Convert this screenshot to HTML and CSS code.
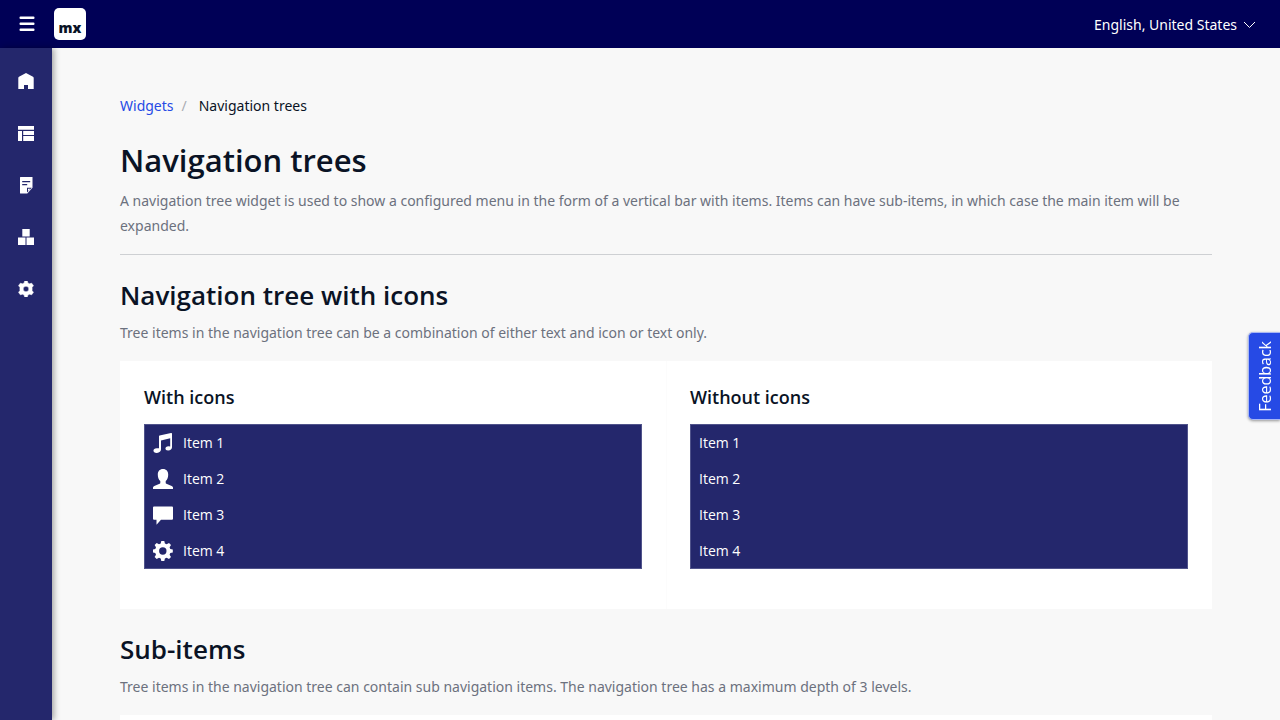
FILE: index.html
```html
<!DOCTYPE html>
<html lang="en">
<head>
<meta charset="utf-8">
<meta name="viewport" content="width=device-width, initial-scale=1">
<title>Navigation trees</title>
<link rel="stylesheet" href="styles.css">
</head>
<body>
<header class="topbar">
  <button class="menu-toggle" type="button" aria-label="Toggle menu">
    <svg width="16" height="16" viewBox="0 0 16 16" fill="currentColor"><rect x="0.5" y="0.5" width="15" height="2.5" rx="1"/><rect x="0.5" y="6.500" width="15" height="2.5" rx="1"/><rect x="0.5" y="12.500" width="15" height="2.5" rx="1"/></svg>
  </button>
  <a class="logo" href="#" aria-label="Home"><span class="logo-text">mx</span></a>
  <button class="language" type="button">English, United States
    <svg width="13" height="8" viewBox="0 0 13 8" fill="none" stroke="currentColor"><path d="M1 1l5.500 5.500L12 1"/></svg>
  </button>
</header>
<div class="layout">
  <nav class="sidebar" aria-label="Main">
    <a class="side-link" href="#" aria-label="Home"><svg width="16" height="16" viewBox="0 0 16 16" fill="currentColor"><path d="M8 0l7 3.700q.7.400.7 1.200V16H10v-4H6v4H.3V4.900Q.3 4.100 1 3.700z"/></svg></a>
    <a class="side-link" href="#" aria-label="Layouts"><svg width="16" height="16" viewBox="0 0 16 16" fill="currentColor"><path d="M0 1h16v3.700H0zM0 6h4v10H0zM5.200 6H16v4H5.200zM5.200 11H16v5H5.200z"/></svg></a>
    <a class="side-link" href="#" aria-label="Pages"><svg width="16" height="17" viewBox="0 0 16 17" fill="currentColor" fill-rule="evenodd"><path d="M2.500 0h12v10.800L9.300 16.500H2.500q-.5 0-.5-.5V.5q0-.5.500-.5zM4.200 4v1.200h8V4zM4.200 7v1.200h5V7zM9 15.500l4.800-4.700H9z"/><path d="M10 11.800h2.500L10 14.300z"/></svg></a>
    <a class="side-link" href="#" aria-label="Widgets"><svg width="16" height="16" viewBox="0 0 16 16" fill="currentColor"><path d="M4.300 0h7.400v7.500H4.300zM0 8.500h7.500V16H0zM8.500 8.500H16V16H8.500z"/></svg></a>
    <a class="side-link" href="#" aria-label="Settings"><svg width="16" height="16" viewBox="0 0 16 16" fill="currentColor" fill-rule="evenodd"><path d="M6.700 0h2.600l.6 2 1.500.8 2.300-.6L15.500 4.700 14.100 6.300v3.400L15.500 11.300l-1.800 2.500-2.300-.6-1.500.8-.6 2H6.700l-.6-2-1.500-.8-2.300.6L.5 11.300l1.400-1.600V6.300L.5 4.700l1.800-2.500 2.300.6L6.100 2zM8 5.200a2.800 2.800 0 1 0 0 5.600 2.800 2.800 0 0 0 0-5.600z" stroke="currentColor" stroke-width=".5" stroke-linejoin="round"/></svg></a>
  </nav>
  <main class="content">
    <nav aria-label="Breadcrumb">
      <ol class="breadcrumb"><li><a href="#">Widgets</a></li><li class="crumb-current" aria-current="page">Navigation trees</li></ol>
    </nav>
    <div class="page-head">
      <h1>Navigation trees</h1>
      <p>A navigation tree widget is used to show a configured menu in the form of a vertical bar with items. Items can have sub-items, in which case the main item will be expanded.</p>
    </div>
    <section class="block">
      <h2>Navigation tree with icons</h2>
      <p>Tree items in the navigation tree can be a combination of either text and icon or text only.</p>
      <div class="card">
        <div class="col">
          <h3>With icons</h3>
          <ul class="tree">
            <li><a href="#"><svg width="20" height="20" viewBox="0 0 20 20" fill="currentColor"><path d="M6 3.300Q6 2.700 6.600 2.500L18 0q1-.1 1 .7v13.600c0 1.800-1.500 3.200-3.900 3.300-3.700 0-3.500-4.200.4-4.300l1.700.2V5.300L8 7.600v8.600c0 2-1.600 3.500-4 3.700-4.700.2-4.700-4.300-.2-4.600L6 15.200z"/></svg>Item 1</a></li>
            <li><a href="#"><svg width="20" height="20" viewBox="0 0 20 20" fill="currentColor"><path d="M10 0c3.400 0 5.200 2.300 5.200 5.700 0 2.900-1 5.100-2.500 6.400v1.600c0 .6.200.9.700 1.100l5.300 2.300q1.300.6 1.300 1.500V20H0v-1.400q0-.9 1.300-1.500l5.300-2.300c.5-.2.700-.5.700-1.100v-1.600C5.800 10.800 4.800 8.600 4.800 5.700 4.800 2.300 6.600 0 10 0z"/></svg>Item 2</a></li>
            <li><a href="#"><svg width="20" height="20" viewBox="0 0 20 20" fill="currentColor"><path d="M1 1.500h18Q20 1.500 20 2.500v11.300q0 1-1 1H8L3.500 19.700v-4.900H1Q0 14.800 0 13.800V2.500q0-1 1-1z"/></svg>Item 3</a></li>
            <li><a href="#"><svg width="20" height="20" viewBox="0 0 20 20" fill="currentColor" fill-rule="evenodd"><path d="M8.300 0h3l.6 2.600 1.700.7L16 2l2 2-1.400 2.300.7 1.700 2.500.6v2.900l-2.500.6-.7 1.700L18 16.100l-2 2-2.400-1.400-1.700.7-.6 2.600h-3l-.6-2.600-1.700-.7-2.300 1.400-2.100-2L3 13.800l-.7-1.700-2.300-.6V8.600L2.300 8 3 6.300 1.600 4l2.100-2L6 3.300l1.700-.7zM9.800 6.300a3.700 3.700 0 1 0 0 7.400 3.700 3.700 0 0 0 0-7.400z"/></svg>Item 4</a></li>
          </ul>
        </div>
        <div class="col">
          <h3>Without icons</h3>
          <ul class="tree">
            <li><a href="#">Item 1</a></li>
            <li><a href="#">Item 2</a></li>
            <li><a href="#">Item 3</a></li>
            <li><a href="#">Item 4</a></li>
          </ul>
        </div>
      </div>
    </section>
    <section class="block">
      <h2>Sub-items</h2>
      <p>Tree items in the navigation tree can contain sub navigation items. The navigation tree has a maximum depth of 3 levels.</p>
      <div class="card"><div class="col"></div></div>
    </section>
  </main>
</div>
<button class="feedback" type="button"><span class="feedback-text">Feedback</span></button>
</body>
</html>
```

FILE: styles.css
```css
* { box-sizing: border-box; }
body {
  margin: 0;
  height: 100vh;
  display: flex;
  flex-direction: column;
  overflow: hidden;
  font: 14px/20px "Noto Sans", "Open Sans", sans-serif;
  color: #0a1325;
  background: #f8f8f8;
}
h1, h2, h3, p, ul, ol { margin: 0; padding: 0; }
h1, h2, h3 { font-family: "Open Sans", sans-serif; font-weight: 600; }
ul, ol { list-style: none; }
a { text-decoration: none; }
button { border: 0; background: none; font: inherit; color: inherit; cursor: pointer; }
svg { display: block; flex: none; }

.topbar {
  flex: none;
  display: flex;
  align-items: center;
  height: 48px;
  padding-right: 24px;
  color: #fff;
  background: #000056;
}
.menu-toggle { display: flex; justify-content: center; width: 54px; padding: 0; }
.logo {
  display: flex;
  align-items: flex-end;
  justify-content: center;
  width: 32px;
  height: 32px;
  border-radius: 5px;
  color: #0a1325;
  background: #fff;
}
.logo-text { font-family: "Open Sans", sans-serif; font-size: 14px; font-weight: 800; line-height: 24px; }
.language {
  display: flex;
  align-items: center;
  gap: 6px;
  margin-left: auto;
  padding: 2px 0 0;
}

.layout { flex: 1; display: flex; min-height: 0; }
.sidebar {
  flex: none;
  width: 52px;
  padding-top: 7px;
  background: #24276c;
  box-shadow: 2px 0 6px rgba(0, 0, 0, .35);
}
.side-link { display: flex; align-items: center; justify-content: center; height: 52px; color: #fff; }

.content {
  flex: 1;
  min-width: 0;
  padding: 48px 68px;
  overflow-y: auto;
  scrollbar-width: none;
}
.breadcrumb { display: flex; }
.breadcrumb a { color: #264ae5; }
.crumb-current::before { content: "/"; padding: 0 12px 0 8px; color: #a9acb3; }

.content p { color: #6c717e; line-height: 25px; }
.page-head { padding: 24px 0 16px; border-bottom: 1px solid #ced0d3; }
h1 { margin-bottom: 8px; font-size: 31px; line-height: 40px; }
.block { padding-top: 22px; }
.block h2 { margin-bottom: 7px; font-size: 26px; line-height: 36px; }
.card {
  display: grid;
  grid-template-columns: 1fr 1fr;
  margin-top: 16px;
  background: #fff;
}
.col { min-height: 248px; padding: 24px; }
.col + .col { border-left: 1px solid #fcfcfc; padding-left: 23px; }
.col h3 { margin-bottom: 14px; font-size: 18px; line-height: 25px; }
.tree {
  padding-top: 1px;
  background: #24276c;
  box-shadow: inset 0 0 0 1px #50538b;
  font-family: "Open Sans", sans-serif;
}
.tree a {
  display: flex;
  align-items: center;
  gap: 10px;
  height: 36px;
  padding: 0 9px;
  color: #fff;
}

.feedback {
  position: fixed;
  top: 332px;
  right: 0;
  width: 32px;
  height: 88px;
  padding: 0 0 0 1px;
  border: 1px solid #a8b7f5;
  border-right: 0;
  border-radius: 5px 0 0 5px;
  font-family: "Open Sans", sans-serif;
  font-size: 16px;
  color: #fff;
  background: #264ae5;
  box-shadow: 0 1px 3px rgba(0, 0, 0, .4);
}
.feedback-text { writing-mode: vertical-rl; rotate: 180deg; display: block; margin: auto; }
```
